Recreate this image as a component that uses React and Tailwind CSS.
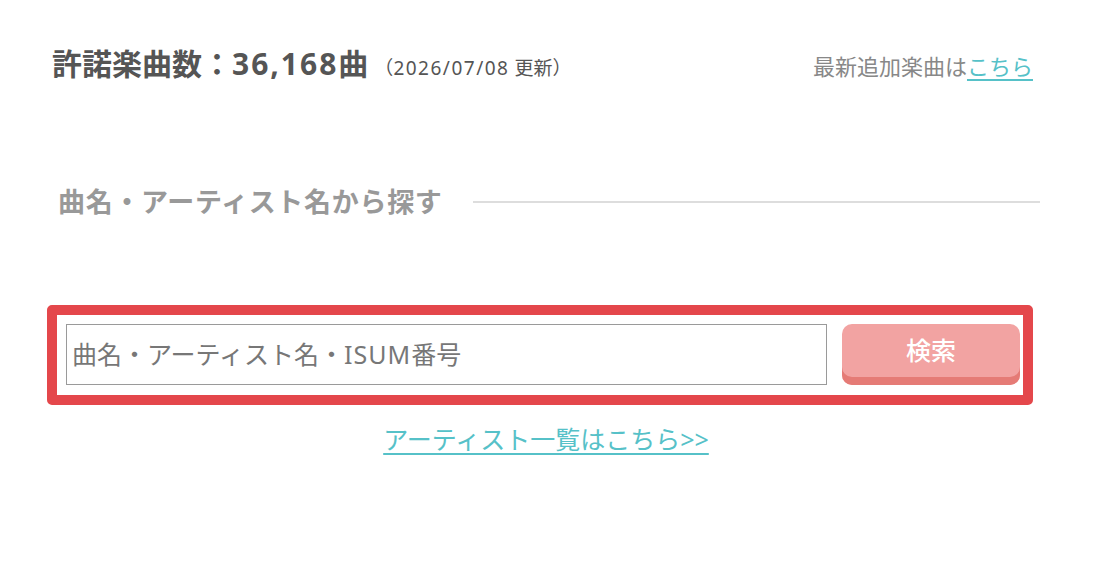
export default function App() {
  const jp = { fontFamily: '"Noto Sans", "Noto Sans CJK JP", sans-serif' };
  return (
    <div className="w-[1100px] h-[564px] bg-white overflow-hidden" style={jp}>
      <div className="ml-[47px] w-[986px] flex flex-col">
        {/* Title row */}
        <div className="mt-[40px] h-[48px] flex items-baseline justify-between pl-[5px]">
          <div className="flex items-baseline">
            <span className="text-[30px] font-bold text-[#555555] leading-[48px]">
              許諾楽曲数：<span className="tracking-[2px]">36,168</span>曲
            </span>
            <span className="ml-[6px] text-[19px] text-[#555555]">
              （<span className="tracking-[1.5px]">2026/07/08</span> 更新）
            </span>
          </div>
          <div className="text-[22px] text-[#888888]">
            最新追加楽曲は
            <a href="#" className="text-[#56c1c8] underline underline-offset-[4px] decoration-[2px]">こちら</a>
          </div>
        </div>

        {/* Section heading */}
        <div className="mt-[94px] h-[40px] flex items-center pl-[11px] -mr-[7px]">
          <span className="text-[27px] tracking-[0.7px] font-bold text-[#999999] leading-[40px] whitespace-nowrap">曲名・アーティスト名から探す</span>
          <div className="ml-[30px] flex-1 h-[2px] bg-[#dddddd]"></div>
        </div>

        {/* Search box */}
        <div className="mt-[83px] border-[10px] border-[#e4474b] rounded-[5px] pt-[9px] pb-[10px] pl-[9px] pr-[3px] flex items-start bg-white">
          <div className="w-[761px] h-[61px] border border-[#9a9a9a] flex items-center px-[5px]">
            <span className="text-[25px] text-[#777777] whitespace-nowrap">
              曲名・アーティスト名・<span className="tracking-[1px]">ISUM</span>番号
            </span>
          </div>
          <button className="ml-[15px] w-[178px] h-[61px] rounded-[10px] bg-[#f2a3a2] shadow-[inset_0_-8px_0_#e57b76] flex items-center justify-center pb-[8px]">
            <span className="text-[25px] text-white font-medium">検索</span>
          </button>
        </div>

        {/* Artist link */}
        <div className="mt-[16px] text-center pl-[12px]">
          <a href="#" className="text-[25px] text-[#56c1c8] underline underline-offset-[4px] decoration-[2px]">アーティスト一覧はこちら&gt;&gt;</a>
        </div>
      </div>
    </div>
  );
}
